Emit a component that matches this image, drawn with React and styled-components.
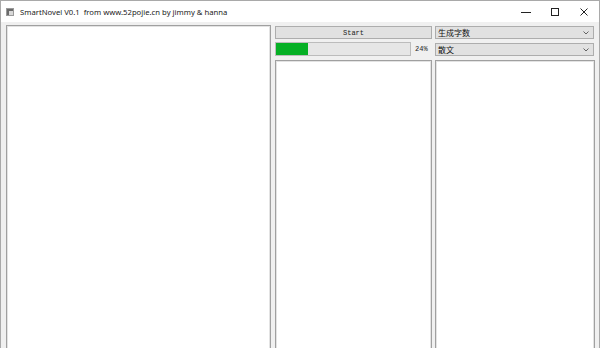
import React from "react";
import styled, { createGlobalStyle } from "styled-components";

const GlobalStyle = createGlobalStyle`
  html, body {
    margin: 0;
    padding: 0;
    background: #f0f0f0;
  }
`;

const Window = styled.div`
  width: 600px;
  height: 348px;
  box-sizing: border-box;
  border: 1px solid #a9a9a9;
  border-bottom: none;
  background: #f0f0f0;
  display: flex;
  flex-direction: column;
  overflow: hidden;
  font-family: "Noto Sans", "Liberation Sans", sans-serif;
`;

const TitleBar = styled.div`
  height: 21px;
  flex: none;
  background: #ffffff;
  display: flex;
  align-items: center;
  padding-left: 5px;
`;

const AppIcon = styled.div`
  width: 6px;
  height: 6px;
  border: 1px solid #9a9a9a;
  background: #d8d8d8;
  box-shadow: inset 2px 2px 0 #6a6a6a;
  margin-right: 6px;
`;

const Title = styled.span`
  font-size: 7.7px;
  color: #1a1a1a;
  white-space: pre;
  flex: 1;
`;

const Controls = styled.div`
  display: flex;
  align-items: center;
  height: 100%;
  margin-right: 1px;
`;

const ControlButton = styled.div`
  width: 29px;
  height: 100%;
  display: flex;
  align-items: center;
  justify-content: center;
`;

const Body = styled.div`
  flex: 1;
  display: grid;
  grid-template-columns: 266px 157px 160px;
  grid-template-rows: 14px 14px 1fr;
  column-gap: 3px;
  row-gap: 3px;
  padding: 3px 3px 0 5px;
  min-height: 0;
`;

const TextPanel = styled.div`
  background: #ffffff;
  border: 1px solid #a0a0a0;
  box-shadow: inset 1px 1px 0 #e3e3e3, inset -1px 0 0 #e3e3e3;
  grid-row: ${(p) => p.$row};
  grid-column: ${(p) => p.$col};
  margin-right: ${(p) => p.$mr || 0}px;
  margin-top: ${(p) => p.$mt || 0}px;
  height: 400px;
`;

const Button = styled.div`
  grid-row: 1;
  grid-column: 2;
  margin-top: 1px;
  background: #e1e1e1;
  border: 1px solid #adadad;
  box-sizing: border-box;
  display: flex;
  align-items: center;
  justify-content: center;
  font-family: "Liberation Mono", monospace;
  font-size: 7px;
  color: #222;
`;

const ProgressRow = styled.div`
  grid-row: 2;
  grid-column: 2;
  display: flex;
  align-items: center;
  gap: 3px;
`;

const ProgressTrack = styled.div`
  flex: 1;
  height: 14px;
  box-sizing: border-box;
  border: 1px solid #bcbcbc;
  background: #e6e6e6;
`;

const ProgressFill = styled.div`
  height: 100%;
  background: #06b025;
`;

const Percent = styled.span`
  font-family: "Liberation Mono", monospace;
  font-size: 7px;
  color: #222;
  width: 17px;
  padding-left: 1px;
`;

const Combo = styled.div`
  grid-row: ${(p) => p.$row};
  grid-column: 3;
  margin-right: 1px;
  margin-top: 1px;
  box-sizing: border-box;
  background: #e1e1e1;
  border: 1px solid #adadad;
  display: flex;
  align-items: center;
  padding: 0 4px 0 2px;
  font-family: "Noto Sans CJK SC", sans-serif;
  font-size: 8px;
  color: #111;
`;

const ComboText = styled.span`
  flex: 1;
`;

const Chevron = () => (
  <svg width="6" height="4" viewBox="0 0 6 4">
    <path d="M0.5 0.5 L3 3 L5.5 0.5" fill="none" stroke="#555" strokeWidth="0.9" />
  </svg>
);

export default function App() {
  const progress = 24;
  return (
    <>
      <GlobalStyle />
      <Window>
        <TitleBar>
          <AppIcon />
          <Title>SmartNovel V0.1  from www.52pojie.cn by jimmy &amp; hanna</Title>
          <Controls>
            <ControlButton>
              <svg width="10" height="10" viewBox="0 0 10 10">
                <path d="M0 5.5 H10" stroke="#222" strokeWidth="1" />
              </svg>
            </ControlButton>
            <ControlButton>
              <svg width="10" height="10" viewBox="0 0 10 10">
                <rect x="1.5" y="1.5" width="7" height="7" fill="none" stroke="#222" strokeWidth="1" />
              </svg>
            </ControlButton>
            <ControlButton>
              <svg width="10" height="10" viewBox="0 0 10 10">
                <path d="M1.5 1.5 L8.5 8.5 M8.5 1.5 L1.5 8.5" stroke="#222" strokeWidth="1" />
              </svg>
            </ControlButton>
          </Controls>
        </TitleBar>
        <Body>
          <TextPanel $row="1 / 4" $col={1} $mr={1} />
          <Button>Start</Button>
          <ProgressRow>
            <ProgressTrack>
              <ProgressFill style={{ width: `${progress}%` }} />
            </ProgressTrack>
            <Percent>{progress}%</Percent>
          </ProgressRow>
          <Combo $row={1}>
            <ComboText>生成字数</ComboText>
            <Chevron />
          </Combo>
          <Combo $row={2}>
            <ComboText>散文</ComboText>
            <Chevron />
          </Combo>
          <TextPanel $row={3} $col={2} $mt={1} />
          <TextPanel $row={3} $col={3} $mt={1} />
        </Body>
      </Window>
    </>
  );
}
